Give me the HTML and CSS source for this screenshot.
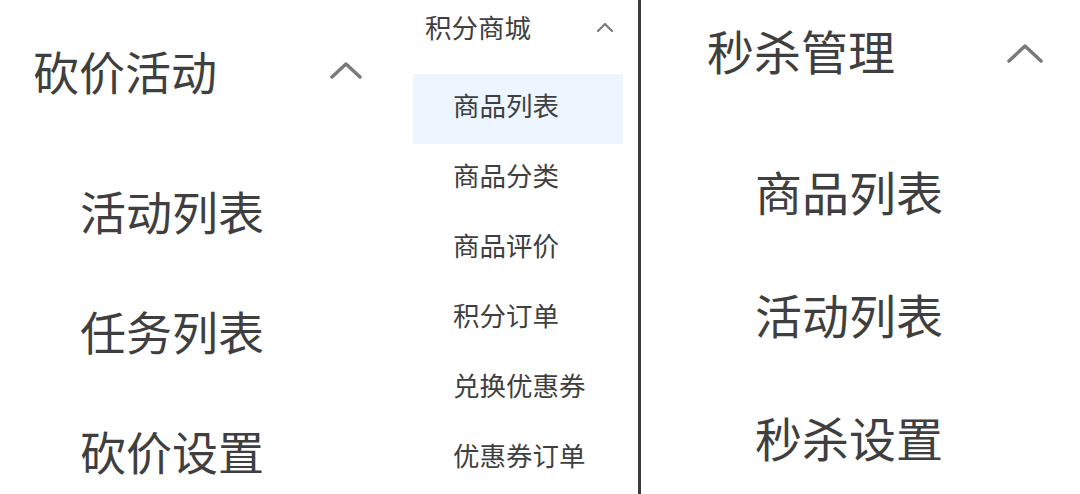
FILE: index.html
```html
<!DOCTYPE html>
<html lang="zh">
<head>
<meta charset="utf-8">
<link rel="stylesheet" href="styles.css">
</head>
<body>
<div class="page">
  <section class="panel panel-left">
    <div class="head head-left">
      <span class="title">砍价活动</span>
      <svg class="chev chev-l" viewBox="0 0 32 18"><polyline points="2,16 16,3 30,16"/></svg>
    </div>
    <ul class="list list-left">
      <li>活动列表</li>
      <li>任务列表</li>
      <li>砍价设置</li>
    </ul>
  </section>

  <section class="panel panel-mid">
    <div class="head head-mid">
      <span class="title">积分商城</span>
      <svg class="chev chev-m" viewBox="0 0 16 10"><polyline points="1,9 8,2 15,9"/></svg>
    </div>
    <ul class="list list-mid">
      <li class="active">商品列表</li>
      <li>商品分类</li>
      <li>商品评价</li>
      <li>积分订单</li>
      <li>兑换优惠券</li>
      <li>优惠券订单</li>
    </ul>
  </section>

  <div class="divider"></div>

  <section class="panel panel-right">
    <div class="head head-right">
      <span class="title">秒杀管理</span>
      <svg class="chev chev-r" viewBox="0 0 36 20"><polyline points="2,18 18,3 34,18"/></svg>
    </div>
    <ul class="list list-right">
      <li>商品列表</li>
      <li>活动列表</li>
      <li>秒杀设置</li>
    </ul>
  </section>
</div>
</body>
</html>
```

FILE: styles.css
```css
* { box-sizing: border-box; }
html, body {
  margin: 0;
  padding: 0;
  background: #ffffff;
}
body {
  font-family: "Noto Sans CJK SC", "Microsoft YaHei", sans-serif;
  color: #3f3f3f;
  width: 1080px;
  height: 494px;
  overflow: hidden;
}
.page {
  display: flex;
  height: 494px;
}
.list {
  list-style: none;
  margin: 0;
  padding: 0;
}
.head {
  display: flex;
  align-items: center;
  justify-content: space-between;
}
.chev polyline {
  fill: none;
  stroke: #7a7a7a;
  stroke-linecap: round;
  stroke-linejoin: round;
}

/* left panel */
.panel-left {
  width: 413px;
  padding-left: 33px;
}
.head-left {
  width: 329px;
  height: 150px;
  padding-bottom: 10px;
  font-size: 46px;
  line-height: 60px;
}
.chev-l { width: 32px; height: 18px; }
.chev-l polyline { stroke-width: 3.5; }
.list-left li {
  font-size: 46px;
  height: 120px;
  line-height: 120px;
  padding-left: 47px;
}

/* middle panel */
.panel-mid {
  width: 210px;
}
.head-mid {
  height: 54px;
  margin-bottom: 20px;
  padding: 0 10px 0 12px;
  font-size: 26.5px;
  line-height: 40px;
}
.chev-m { width: 16px; height: 10px; }
.chev-m polyline { stroke-width: 2.2; }
.list-mid li {
  font-size: 26.5px;
  height: 70px;
  line-height: 62px;
  padding-left: 40px;
  white-space: nowrap;
}
.list-mid li.active {
  background: #edf5fe;
}

/* divider */
.divider {
  width: 3px;
  margin-left: 15px;
  background: #3c3c3c;
  height: 494px;
}

/* right panel */
.panel-right {
  flex: 1;
  padding-left: 66px;
}
.head-right {
  width: 336px;
  height: 129px;
  padding-bottom: 30px;
  font-size: 47px;
  line-height: 60px;
}
.chev-r { width: 36px; height: 20px; margin-top: 6px; }
.chev-r polyline { stroke-width: 3.5; }
.list-right li {
  font-size: 47px;
  height: 123px;
  line-height: 123px;
  padding-left: 48px;
}
```
